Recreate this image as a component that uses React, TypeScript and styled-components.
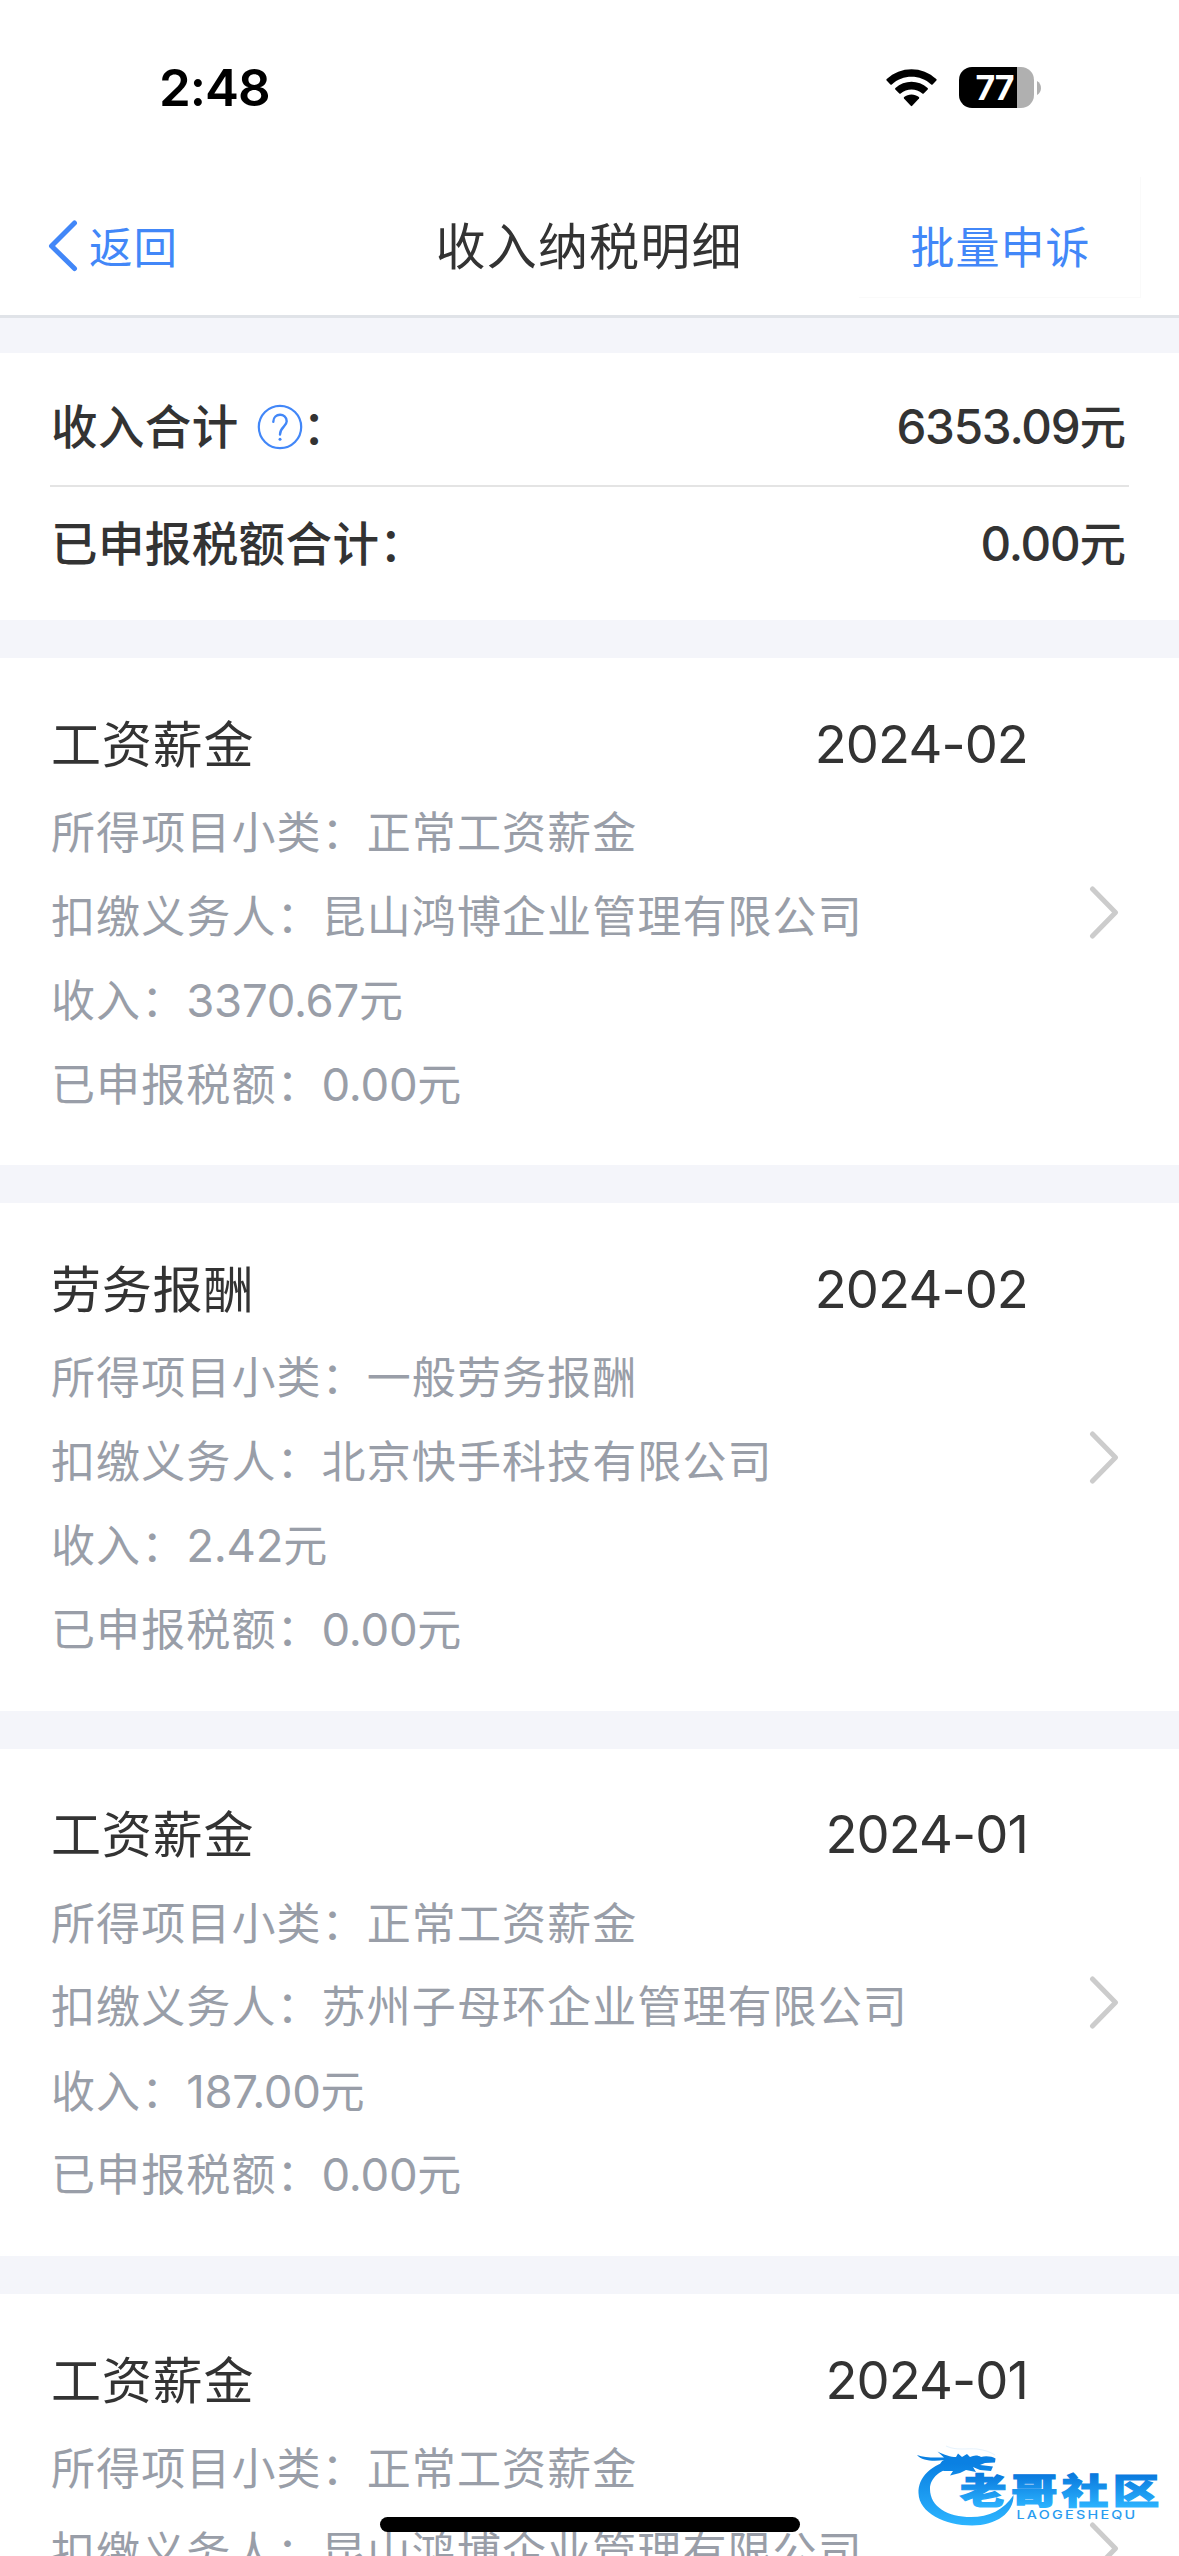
import React from "react";
import styled, { createGlobalStyle } from "styled-components";

const GlobalStyle = createGlobalStyle`
  *, *::before, *::after { box-sizing: border-box; }
  html, body { margin: 0; padding: 0; }
  body {
    background: #ffffff;
    font-family: Inter, "Noto Sans CJK SC", sans-serif;
    -webkit-font-smoothing: antialiased;
  }
`;

const Screen = styled.main`
  position: relative;
  width: 1179px;
  height: 2556px;
  overflow: hidden;
  display: flex;
  flex-direction: column;
  background: #f4f5fa;
`;

const StatusBar = styled.div`
  flex: none;
  height: 177px;
  padding: 0 138px 0 159px;
  display: flex;
  align-items: flex-start;
  justify-content: space-between;
  background: #ffffff;
  color: #000000;
`;

const Clock = styled.time`
  margin-top: 57px;
  font-size: 51px;
  line-height: 62px;
  font-weight: 600;
  letter-spacing: -1px;
`;

const StatusIcons = styled.div`
  margin-top: 67px;
  height: 41px;
  display: flex;
  align-items: center;
`;

const Battery = styled.div`
  width: 75px;
  height: 41px;
  margin: 0 3px 0 22px;
  padding-right: 4px;
  border-radius: 13px;
  display: flex;
  align-items: center;
  justify-content: center;
  background: linear-gradient(to right, #000000 58px, #b0b0b0 58px);
  color: #ffffff;
  font-size: 34px;
  line-height: 41px;
  font-weight: 700;
  letter-spacing: -1px;
`;

const NavBar = styled.header`
  flex: none;
  height: 141px;
  padding: 0 38px 0 48px;
  display: grid;
  grid-template-columns: 387.5px 1fr 282px;
  align-items: center;
  background: #ffffff;
  border-bottom: 3px solid #e0e3e8;
`;

const BackButton = styled.a`
  justify-self: start;
  display: flex;
  align-items: center;
  gap: 10px;
  color: #4287f8;
  font-size: 43.5px;
  letter-spacing: 1px;
  line-height: 66px;
`;

const BackText = styled.span`
  padding-top: 3px;
`;

const NavTitle = styled.h1`
  margin: 0;
  padding-top: 1px;
  color: #333333;
  font-size: 50px;
  letter-spacing: 1.2px;
  line-height: 74px;
  font-weight: 400;
`;

const NavAction = styled.a`
  align-self: start;
  height: 121px;
  padding: 38px 0 0 51.5px;
  border-right: 1px solid #fafafa;
  border-bottom: 1px solid #fafafa;
  color: #4287f8;
  font-size: 44px;
  letter-spacing: 1px;
  line-height: 66px;
`;

const Summary = styled.section`
  flex: none;
  height: 267.5px;
  margin-top: 34.5px;
  padding: 17px 50px 0;
  background: #ffffff;
`;

const SummaryRow = styled.div<{ $divided?: boolean }>`
  height: ${(p) => (p.$divided ? 117 : 115)}px;
  padding: 0 0 0 1px;
  display: flex;
  align-items: center;
  justify-content: space-between;
  border-bottom: ${(p) => (p.$divided ? "2px solid #e4e4e4" : "none")};
  color: #333333;
  font-size: 46.5px;
  line-height: 68px;
  font-weight: 500;
`;

const SummaryLabel = styled.span`
  display: flex;
  align-items: center;
  letter-spacing: 0.4px;
`;

const HelpIcon = styled.svg`
  display: block;
  margin-left: 18px;
`;

const Amount = styled.span`
  padding-right: 3px;
`;

const Digits = styled.span<{ $size: number; $spacing: number }>`
  font-size: ${(p) => p.$size}px;
  letter-spacing: ${(p) => p.$spacing}px;
`;

const Card = styled.article`
  flex: none;
  height: 507.4px;
  margin-top: 38px;
  padding: 49px 60px 0 51px;
  display: grid;
  grid-template-columns: 977px 1fr;
  background: #ffffff;
`;

const CardBody = styled.div``;

const CardHead = styled.div`
  height: 76px;
  margin-bottom: 9px;
  display: flex;
  align-items: center;
  justify-content: space-between;
  color: #333333;
  font-size: 50px;
  line-height: 74px;
`;

const Kind = styled.span`
  margin-top: -1px;
  letter-spacing: 0.8px;
`;

const Month = styled.time`
  margin-top: -3px;
  font-size: 52.5px;
  letter-spacing: -0.9px;
`;

const Detail = styled.p`
  margin: 0;
  height: 83.5px;
  color: #999ea8;
  font-size: 44px;
  letter-spacing: 1.1px;
  line-height: 83.5px;
  white-space: nowrap;
`;

const CardArrow = styled.svg`
  display: block;
  justify-self: end;
  margin-top: 177.5px;
`;

const HomeIndicator = styled.div`
  position: absolute;
  left: 380px;
  top: 2517px;
  width: 420px;
  height: 15px;
  border-radius: 8px;
  background: #000000;
`;

const Watermark = styled.svg`
  position: absolute;
  left: 910px;
  top: 2435px;
`;

type Income = {
  kind: string;
  month: string;
  category: string;
  payer: string;
  income?: string;
  tax?: string;
};

const incomes: Income[] = [
  { kind: "工资薪金", month: "2024-02", category: "正常工资薪金", payer: "昆山鸿博企业管理有限公司", income: "3370.67", tax: "0.00" },
  { kind: "劳务报酬", month: "2024-02", category: "一般劳务报酬", payer: "北京快手科技有限公司", income: "2.42", tax: "0.00" },
  { kind: "工资薪金", month: "2024-01", category: "正常工资薪金", payer: "苏州子母环企业管理有限公司", income: "187.00", tax: "0.00" },
  { kind: "工资薪金", month: "2024-01", category: "正常工资薪金", payer: "昆山鸿博企业管理有限公司" },
];

function Wifi() {
  return (
    <svg width="51" height="38" viewBox="0 0 51 38" aria-hidden="true">
      <path d="M0.6 11.5 Q0 10.8 0.7 10.1 C14.5 -3.2 36.5 -3.2 50.3 10.1 Q51 10.8 50.4 11.5 L46.6 15.5 Q45.9 16.2 45.2 15.5 C34.2 5.2 16.8 5.2 5.8 15.5 Q5.1 16.2 4.4 15.5 Z" />
      <path d="M9.3 20.4 Q8.7 19.7 9.4 19 C18.5 10.8 32.5 10.8 41.6 19 Q42.3 19.7 41.7 20.4 L37.7 24.5 Q37 25.2 36.3 24.5 C30.2 19.2 20.8 19.2 14.7 24.5 Q14 25.2 13.3 24.5 Z" />
      <path d="M18 29.4 Q17.4 28.7 18.1 28.1 C22.3 24.6 28.7 24.6 32.9 28.1 Q33.6 28.7 33 29.4 L26.2 36.8 Q25.5 37.5 24.8 36.8 Z" />
    </svg>
  );
}

function CommunityLogo() {
  return (
    <Watermark width="260" height="100" viewBox="0 0 260 100">
      <defs>
        <linearGradient id="ring" x1="0" y1="18" x2="0" y2="90" gradientUnits="userSpaceOnUse">
          <stop offset="0.15" stopColor="#0a80e2" />
          <stop offset="1" stopColor="#2cb4ff" />
        </linearGradient>
        <linearGradient id="word" x1="0" y1="-29" x2="0" y2="4" gradientUnits="userSpaceOnUse">
          <stop offset="0" stopColor="#0a7ade" />
          <stop offset="1" stopColor="#2cb4ff" />
        </linearGradient>
      </defs>
      <path
        d="M46 24 C20 29 8 43 8.5 58 C9 78 35 90.5 62 90.5 C86 90.5 104 78 103.5 60 C94 75 79 82 61 82 C38 82 20 72 20 54 C20 43 30 34 48 31 Z"
        fill="url(#ring)"
      />
      <path
        d="M7 20 C14 23 23 22.5 34 22.5 L27.5 16.5 C34 20 41 22 46 22 L48 18.5 L52 22 L57 19 L60 22 C64 20 68 20 71 22 C76 20.5 82 21.5 85.5 23.5 L85 27.5 L75 28 L70 30 L83 31.5 L81 36 L70 35 L63 32 L66 37 L56 35 L50 38 L40 40.5 L43 36 L34 36 L28 33 C31 28 31 26 34 25 C24 26.5 12 26 7 20 Z"
        fill="url(#ring)"
      />
      <path d="M36 11 C46 16 58 13 67 14 C75 15 80 17 85 20" stroke="#e6f3fd" strokeWidth="1" fill="none" />
      <text
        transform="translate(50 69) scale(1.33 1)"
        fontFamily="Noto Sans CJK SC"
        fontWeight="900"
        fontSize="35"
        letterSpacing="3.3"
        fill="url(#word)"
        stroke="url(#word)"
        strokeWidth="1.2"
      >
        老哥社区
      </text>
      <text transform="translate(106.5 83.5) scale(1.25 1)" fontFamily="Inter" fontWeight="500" fontSize="11.5" textLength="95" fill="#2a9cf0">
        LAOGESHEQU
      </text>
    </Watermark>
  );
}

function DetailAmount({ value }: { value: string }) {
  return (
    <>
      <Digits $size={45.5} $spacing={-0.3}>{value}</Digits>元
    </>
  );
}

function IncomeCard({ item }: { item: Income }) {
  return (
    <Card>
      <CardBody>
        <CardHead>
          <Kind>{item.kind}</Kind>
          <Month>{item.month}</Month>
        </CardHead>
        <Detail>所得项目小类：{item.category}</Detail>
        <Detail>扣缴义务人：{item.payer}</Detail>
        {item.income && (
          <Detail>
            收入：<DetailAmount value={item.income} />
          </Detail>
        )}
        {item.tax && (
          <Detail>
            已申报税额：<DetailAmount value={item.tax} />
          </Detail>
        )}
      </CardBody>
      <CardArrow width="30" height="54" viewBox="0 0 30 54" fill="none">
        <path d="M3.5 4 L26.5 27.5 L3.5 51" stroke="#cccccc" strokeWidth="5" strokeLinecap="round" strokeLinejoin="round" />
      </CardArrow>
    </Card>
  );
}

export default function App() {
  return (
    <Screen>
      <GlobalStyle />
      <StatusBar>
        <Clock>2:48</Clock>
        <StatusIcons>
          <Wifi />
          <Battery>77</Battery>
          <svg width="4" height="14" viewBox="0 0 4 14" aria-hidden="true">
            <path d="M0 0 C5.3 2.5 5.3 11.5 0 14 Z" fill="#b0b0b0" />
          </svg>
        </StatusIcons>
      </StatusBar>
      <NavBar>
        <BackButton>
          <svg width="31" height="52" viewBox="0 0 31 52" fill="none">
            <path d="M26.5 3 L3.5 26 L26.5 48.5" stroke="#4287f8" strokeWidth="5" strokeLinecap="round" strokeLinejoin="round" />
          </svg>
          <BackText>返回</BackText>
        </BackButton>
        <NavTitle>收入纳税明细</NavTitle>
        <NavAction>批量申诉</NavAction>
      </NavBar>
      <Summary>
        <SummaryRow $divided>
          <SummaryLabel>
            收入合计
            <HelpIcon width="46" height="46" viewBox="0 0 46 46" fill="none">
              <circle cx="23" cy="23" r="21.2" stroke="#4287f8" strokeWidth="2.2" />
              <path d="M16.3 17.8 C16.3 8.5 29.7 8.5 29.7 17.2 C29.7 22.5 23 23 23 30.5" stroke="#4287f8" strokeWidth="2.4" strokeLinecap="round" />
              <circle cx="23" cy="35.2" r="1.5" fill="#4287f8" />
            </HelpIcon>
            ：
          </SummaryLabel>
          <Amount>
            <Digits $size={47.5} $spacing={-1.2}>6353.09</Digits>元
          </Amount>
        </SummaryRow>
        <SummaryRow>
          <SummaryLabel>已申报税额合计：</SummaryLabel>
          <Amount>
            <Digits $size={47.5} $spacing={-1.2}>0.00</Digits>元
          </Amount>
        </SummaryRow>
      </Summary>
      {incomes.map((item, i) => (
        <IncomeCard key={i} item={item} />
      ))}
      <HomeIndicator />
      <CommunityLogo />
    </Screen>
  );
}
